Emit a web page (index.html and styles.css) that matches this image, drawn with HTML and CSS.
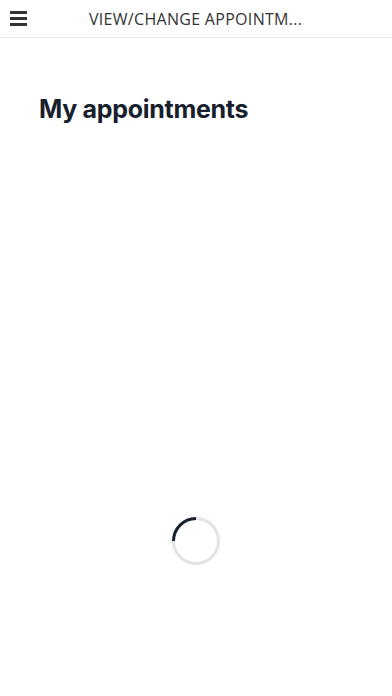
FILE: index.html
```html
<!DOCTYPE html>
<html lang="en">
<head>
	<meta charset="UTF-8">
	<title>appointments</title>
	<link rel="stylesheet" href="styles.css">
</head>
<body>
	<div class="topbar">
		<div class="burger">
			<b></b><b></b><b></b>
		</div>
		<h1 class="title">VIEW/CHANGE APPOINTM...</h1>
	</div>
	<div class="page">
		<h2 class="heading">My appointments</h2>
		<div class="loader">
			<svg width="50" height="50" viewBox="0 0 50 50">
				<circle cx="25" cy="25" r="22.5" fill="none" stroke="#e3e3e5" stroke-width="3"/>
				<path d="M25 2.5 A22.5 22.5 0 0 0 2.5 25" fill="none" stroke="#18202e" stroke-width="3"/>
			</svg>
		</div>
	</div>
</body>
</html>
```

FILE: styles.css
```css
html, body {
	width: 100%;
	height: 100%;
	margin: 0;
	padding: 0;
	background: #fff;
}

.topbar {
	display: flex;
	align-items: center;
	height: 37px;
	border-bottom: 1px solid #e6e6e6;
}
.burger {
	display: flex;
	flex-direction: column;
	gap: 3px;
	width: 17px;
	margin: 0 0 0 10px;
}
.burger b {
	display: block;
	height: 3px;
	background: #333;
}
.title {
	margin: 0 0 0 62px;
	font-family: "Open Sans", sans-serif;
	font-weight: 400;
	font-size: 16px;
	color: #333;
	letter-spacing: 0.3px;
	white-space: nowrap;
}

.page {
	display: flex;
	flex-direction: column;
}
.heading {
	margin: 56px 0 0 39px;
	font-family: "Inter", sans-serif;
	font-weight: 700;
	font-size: 25px;
	color: #18202e;
	letter-spacing: -0.3px;
}
.loader {
	display: flex;
	justify-content: center;
	margin-top: 392px;
}
```
